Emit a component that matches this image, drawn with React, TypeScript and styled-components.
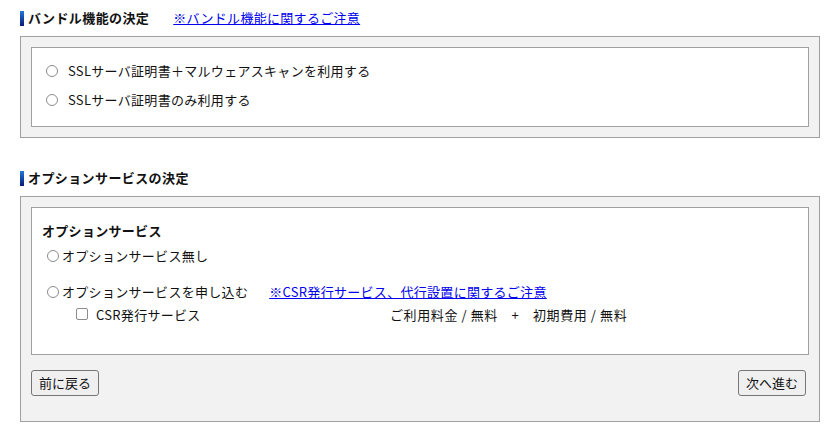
import React from 'react';
import styled, { createGlobalStyle } from 'styled-components';

const BORDER = '#a0a0a0';
const PANEL = '#f2f2f2';
const TEXT = '#111';
const LINK = '#0000ee';

const GlobalStyle = createGlobalStyle`
  body {
    margin: 0;
    background: #fff;
    font-family: "Noto Sans CJK JP", "Noto Sans", sans-serif;
    font-size: 13px;
    color: ${TEXT};
  }
`;

const Page = styled.div`
  width: 800px;
  padding: 8px 0 0 20px;
`;

const Section = styled.section<{ $gap?: number }>`
  margin-top: ${(p) => p.$gap ?? 0}px;
`;

const Heading = styled.div`
  display: flex;
  align-items: center;
  height: 20px;
  margin-bottom: 8px;
`;

const Bar = styled.span`
  width: 4px;
  height: 15px;
  margin-right: 4px;
  background: linear-gradient(to bottom, #1f78d6, #0a1a7a);
`;

const Title = styled.h2`
  margin: 0;
  font-size: 13px;
  font-weight: bold;
  line-height: 20px;
  letter-spacing: 0.4px;
`;

const NoteLink = styled.a<{ $ml: number }>`
  margin-left: ${(p) => p.$ml}px;
  color: ${LINK};
  text-decoration: underline;
  line-height: 20px;
  letter-spacing: 0.3px;
  cursor: pointer;
`;

const Outer = styled.div`
  border: 1px solid ${BORDER};
  background: ${PANEL};
  padding: 10px;
`;

const Inner = styled.div<{ $pad: string }>`
  border: 1px solid ${BORDER};
  background: #fff;
  padding: ${(p) => p.$pad};
  display: flex;
  flex-direction: column;
`;

const Row = styled.label<{ $h: number; $gap: number; $indent?: number; $mt?: number }>`
  display: flex;
  align-items: center;
  height: ${(p) => p.$h}px;
  gap: ${(p) => p.$gap}px;
  padding-left: ${(p) => p.$indent ?? 0}px;
  margin-top: ${(p) => p.$mt ?? 0}px;
  line-height: 18px;
  letter-spacing: 0.3px;
`;

const Radio = styled.input.attrs({ type: 'radio' })`
  appearance: none;
  margin: 0;
  width: 12px;
  height: 12px;
  border: 1px solid #8c8c8c;
  border-radius: 50%;
  background: #fff;
  flex-shrink: 0;
`;

const Check = styled.input.attrs({ type: 'checkbox' })`
  appearance: none;
  margin: 0;
  width: 12px;
  height: 12px;
  border: 1px solid #8c8c8c;
  border-radius: 2px;
  background: #fff;
  flex-shrink: 0;
`;

const SubTitle = styled.div`
  font-weight: bold;
  line-height: 18px;
  height: 24px;
  display: flex;
  align-items: center;
  letter-spacing: 0.3px;
`;

const ServiceRow = styled.div`
  display: grid;
  grid-template-columns: 314px auto;
  align-items: center;
  height: 22px;
  padding-left: 34px;
  letter-spacing: 0.3px;
`;

const CheckLabel = styled.label`
  display: flex;
  align-items: center;
  gap: 8px;
`;

const Price = styled.span`
  white-space: pre;
  letter-spacing: 0.6px;
`;

const Actions = styled.div`
  display: flex;
  justify-content: space-between;
  padding: 15px 3px 15px 0;
`;

const Button = styled.button`
  font-family: inherit;
  font-size: 13px;
  color: ${TEXT};
  height: 26px;
  padding: 0 7px;
  background: #efefef;
  border: 1px solid #767676;
  border-radius: 3px;
  line-height: 22px;
`;

export default function App() {
  return (
    <Page>
      <GlobalStyle />
      <Section>
        <Heading>
          <Bar />
          <Title>バンドル機能の決定</Title>
          <NoteLink $ml={24}>※バンドル機能に関するご注意</NoteLink>
        </Heading>
        <Outer>
          <Inner $pad="8px 14px 12px">
            <Row $h={29} $gap={10}>
              <Radio name="bundle" />
              SSLサーバ証明書＋マルウェアスキャンを利用する
            </Row>
            <Row $h={29} $gap={10}>
              <Radio name="bundle" />
              SSLサーバ証明書のみ利用する
            </Row>
          </Inner>
        </Outer>
      </Section>

      <Section $gap={30}>
        <Heading>
          <Bar />
          <Title>オプションサービスの決定</Title>
        </Heading>
        <Outer>
          <Inner $pad="11px 10px 29px">
            <SubTitle>オプションサービス</SubTitle>
            <Row $h={26} $gap={3} $indent={5}>
              <Radio name="option" />
              オプションサービス無し
            </Row>
            <Row $h={22} $gap={3} $indent={5} $mt={12}>
              <Radio name="option" />
              オプションサービスを申し込む
              <NoteLink $ml={18}>※CSR発行サービス、代行設置に関するご注意</NoteLink>
            </Row>
            <ServiceRow>
              <CheckLabel>
                <Check />
                CSR発行サービス
              </CheckLabel>
              <Price>{'ご利用料金 / 無料　+　初期費用 / 無料'}</Price>
            </ServiceRow>
          </Inner>
          <Actions>
            <Button>前に戻る</Button>
            <Button>次へ進む</Button>
          </Actions>
        </Outer>
      </Section>
    </Page>
  );
}
